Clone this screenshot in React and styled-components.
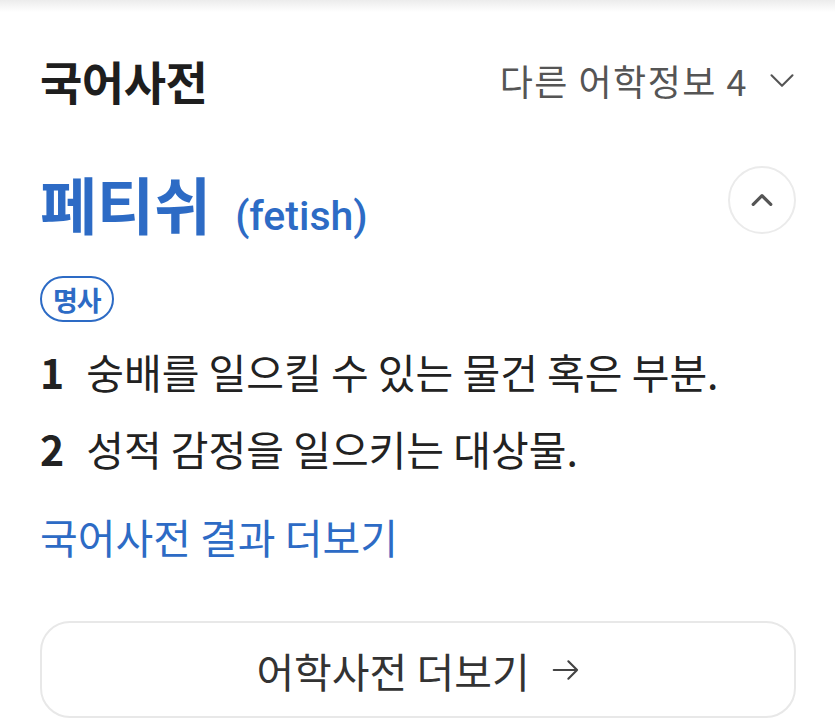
import React from "react";
import styled, { createGlobalStyle } from "styled-components";

const GlobalStyle = createGlobalStyle`
  html, body {
    margin: 0;
    padding: 0;
    background: #ffffff;
  }
  body {
    font-family: "Noto Sans CJK KR", "Noto Sans", sans-serif;
    color: #222222;
  }
`;

const Page = styled.div`
  width: 835px;
  height: 725px;
  box-sizing: border-box;
  padding: 56px 39px 0 40px;
  background: linear-gradient(#ececec 0px, #ffffff 12px);
  overflow: hidden;
`;

const Header = styled.div`
  display: flex;
  align-items: center;
  justify-content: space-between;
  height: 48px;
`;

const Title = styled.h2`
  margin: 0;
  font-size: 46px;
  font-weight: 700;
  letter-spacing: -0.5px;
  line-height: 48px;
  color: #1e1e1e;
`;

const MoreInfo = styled.button`
  display: flex;
  align-items: center;
  gap: 20px;
  padding: 0;
  border: 0;
  background: none;
  font-family: inherit;
  font-size: 36px;
  letter-spacing: 1.5px;
  color: #555555;
`;

const EntryRow = styled.div`
  display: flex;
  align-items: center;
  justify-content: space-between;
  height: 68px;
  margin-top: 62px;
`;

const Headword = styled.div`
  display: flex;
  align-items: baseline;
  gap: 24px;
  padding-top: 8px;
`;

const Word = styled.span`
  font-size: 62px;
  font-weight: 700;
  color: #2d6bc5;
  line-height: 68px;
`;

const Origin = styled.span`
  font-family: Roboto, "Noto Sans", sans-serif;
  font-size: 41px;
  font-weight: 500;
  color: #2d6bc5;
`;

const RoundButton = styled.button`
  width: 68px;
  height: 68px;
  border-radius: 50%;
  border: 2px solid #ebebeb;
  background: #ffffff;
  display: flex;
  align-items: center;
  justify-content: center;
  padding: 0;
`;

const Badge = styled.span`
  display: flex;
  align-items: center;
  justify-content: center;
  width: fit-content;
  box-sizing: border-box;
  height: 46px;
  padding: 0 11px;
  margin-top: 42px;
  border: 2px solid #2d6bc5;
  border-radius: 23px;
  font-size: 27px;
  font-weight: 700;
  letter-spacing: -1px;
  color: #2d6bc5;
`;

const DefList = styled.ol`
  list-style: none;
  margin: 11px 0 0;
  padding: 0;
`;

const Def = styled.li`
  display: flex;
  gap: 22px;
  font-size: 41px;
  line-height: 77px;
  color: #222222;
`;

const Num = styled.span`
  font-weight: 700;
`;

const MoreLink = styled.a`
  display: block;
  margin-top: 24px;
  font-size: 41px;
  line-height: 50px;
  color: #2d6bc5;
  text-decoration: none;
`;

const WideButton = styled.button`
  display: flex;
  align-items: center;
  justify-content: center;
  gap: 22px;
  width: 100%;
  height: 97px;
  margin-top: 60px;
  border: 2px solid #e8e8e8;
  border-radius: 30px;
  background: #ffffff;
  font-family: inherit;
  font-size: 41px;
  color: #333333;
`;

const Chevron = ({ up, size = 28, color = "#555" }) => (
  <svg width={size} height={size} viewBox="0 0 24 24" fill="none">
    <path
      d={up ? "M5 15.5 12 8.5 19 15.5" : "M3 8 12 17 21 8"}
      stroke={color}
      strokeWidth={up ? 2.6 : 1.8}
      strokeLinecap="round"
      strokeLinejoin="round"
    />
  </svg>
);

const Arrow = () => (
  <svg width="28" height="28" viewBox="0 0 24 24" fill="none">
    <path
      d="M1.5 12h20M14 4.5l7.5 7.5-7.5 7.5"
      stroke="#444"
      strokeWidth="1.8"
      strokeLinecap="round"
      strokeLinejoin="round"
    />
  </svg>
);

export default function App() {
  return (
    <Page>
      <GlobalStyle />
      <Header>
        <Title>국어사전</Title>
        <MoreInfo>
          다른 어학정보 4
          <Chevron />
        </MoreInfo>
      </Header>
      <EntryRow>
        <Headword>
          <Word>페티쉬</Word>
          <Origin>(fetish)</Origin>
        </Headword>
        <RoundButton aria-label="접기">
          <Chevron up size={30} color="#555" />
        </RoundButton>
      </EntryRow>
      <Badge>명사</Badge>
      <DefList>
        <Def>
          <Num>1</Num>
          <span>숭배를 일으킬 수 있는 물건 혹은 부분.</span>
        </Def>
        <Def>
          <Num>2</Num>
          <span>성적 감정을 일으키는 대상물.</span>
        </Def>
      </DefList>
      <MoreLink href="#">국어사전 결과 더보기</MoreLink>
      <WideButton>
        어학사전 더보기
        <Arrow />
      </WideButton>
    </Page>
  );
}
